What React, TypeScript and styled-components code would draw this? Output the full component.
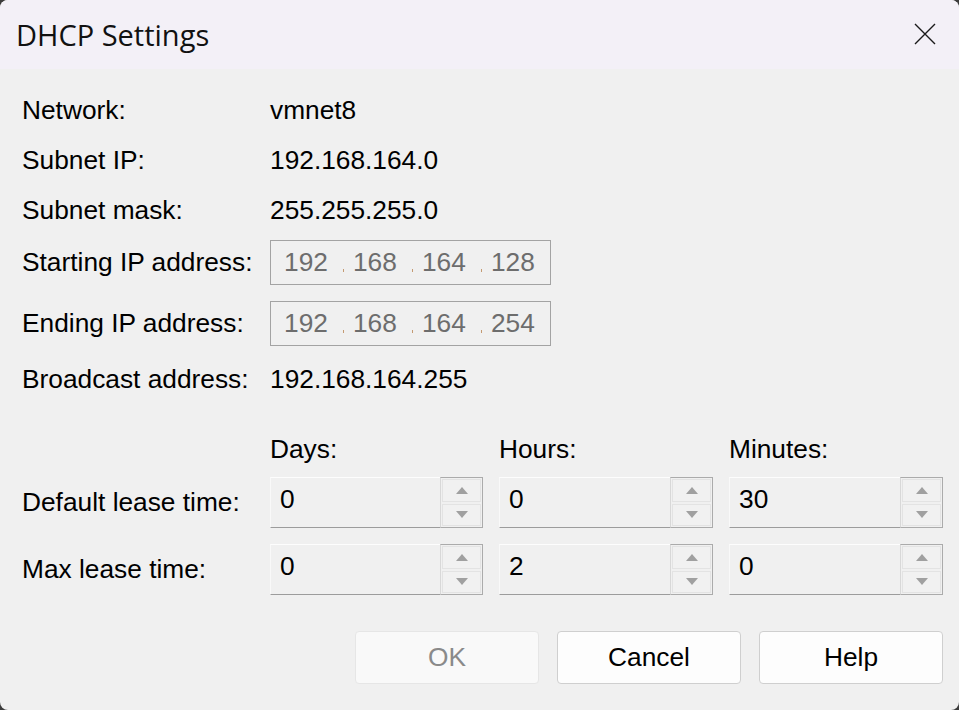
import React from "react";
import styled, { createGlobalStyle } from "styled-components";

const GlobalStyle = createGlobalStyle`
  html, body {
    margin: 0;
    padding: 0;
    background: #3c3c3c;
  }
  * {
    box-sizing: border-box;
  }
`;

const Window = styled.div`
  width: 959px;
  height: 710px;
  background: #f0f0f0;
  border-radius: 8px;
  overflow: hidden;
  display: flex;
  flex-direction: column;
  font-family: "Liberation Sans", Arial, sans-serif;
  color: #000;
`;

const TitleBar = styled.div`
  height: 69px;
  flex-shrink: 0;
  background: #f3f0f7;
  display: flex;
  align-items: center;
  justify-content: space-between;
  padding: 0 22px 0 16px;
`;

const Title = styled.div`
  font-family: "Open Sans", "Noto Sans", sans-serif;
  font-size: 29px;
  margin-top: -1px;
  color: #111;
`;

const CloseButton = styled.div`
  width: 24px;
  height: 24px;
  display: flex;
  align-items: center;
  justify-content: center;
  margin-top: -2px;
`;

const Content = styled.div`
  padding: 16px 16px 0 22px;
  display: flex;
  flex-direction: column;
`;

const Row = styled.div<{ $h: number; $mt?: number }>`
  height: ${(p) => p.$h}px;
  margin-top: ${(p) => p.$mt ?? 0}px;
  display: flex;
  align-items: center;
`;

const Label = styled.div`
  width: 248px;
  font-size: 26.3px;
  white-space: nowrap;
`;

const Value = styled.div`
  font-size: 26.3px;
  white-space: nowrap;
`;

const IpField = styled.div`
  width: 281px;
  height: 45px;
  border: 1px solid #a3a3a3;
  background: #f0f0f0;
  display: flex;
  align-items: center;
  padding-left: 13px;
  color: #6d6d6d;
  font-size: 26.3px;
`;

const Octet = styled.span`
  width: 60px;
`;

const Dot = styled.span`
  width: 10px;
  height: 19px;
  display: flex;
  align-items: flex-end;
  &::after {
    content: "";
    width: 1px;
    height: 3px;
    background: #c49a72;
  }
`;

const LeaseGrid = styled.div`
  margin-top: 29px;
  display: grid;
  grid-template-columns: 232px 213px 214px 214px;
  grid-template-rows: 26px 51px 52px;
  column-gap: 16px;
  row-gap: 15px;
  align-items: center;
  font-size: 26.3px;
`;

const ColHead = styled.div`
  font-size: 26.3px;
`;

const Spinner = styled.div<{ $shift?: number }>`
  height: 51px;
  margin-top: ${(p) => p.$shift ?? 0}px;
  display: flex;
`;

const SpinField = styled.div`
  flex: 1;
  border-top: 1px solid #fdfdfd;
  border-left: 1px solid #f9f9f9;
  border-bottom: 1px solid #9c9c9c;
  background: #f0f0f0;
  padding: 6px 0 0 9px;
  font-size: 26.3px;
  line-height: 30px;
`;

const SpinButtons = styled.div`
  width: 43px;
  border: 1px solid #ababab;
  border-left: 1px solid #d8d8d8;
  padding: 1px;
  display: flex;
  flex-direction: column;
  gap: 2px;
`;

const SpinButton = styled.div`
  flex: 1;
  border: 1px solid #e3e3e3;
  background: #f1f1f1;
  display: flex;
  align-items: center;
  justify-content: center;
`;

const ButtonRow = styled.div`
  margin-top: 36px;
  display: flex;
  justify-content: flex-end;
  gap: 18px;
`;

const DialogButton = styled.div<{ $disabled?: boolean }>`
  width: 184px;
  height: 53px;
  border-radius: 4px;
  border: 1px solid ${(p) => (p.$disabled ? "#e6e6e6" : "#cfcfcf")};
  background: ${(p) => (p.$disabled ? "#f9f9f9" : "#fdfdfd")};
  color: ${(p) => (p.$disabled ? "#8a8a8a" : "#000")};
  display: flex;
  align-items: center;
  justify-content: center;
  font-size: 26.3px;
`;

const Arrow = ({ up }: { up?: boolean }) => (
  <svg width="12" height="7" viewBox="0 0 12 7">
    <path d={up ? "M0 7 L6 0 L12 7 Z" : "M0 0 L6 7 L12 0 Z"} fill="#a0a0a0" />
  </svg>
);

const SpinBox = ({ value, shift }: { value: string; shift?: number }) => (
  <Spinner $shift={shift}>
    <SpinField>{value}</SpinField>
    <SpinButtons>
      <SpinButton>
        <Arrow up />
      </SpinButton>
      <SpinButton>
        <Arrow />
      </SpinButton>
    </SpinButtons>
  </Spinner>
);

const IpAddress = ({ parts }: { parts: string[] }) => (
  <IpField>
    {parts.map((p, i) => (
      <React.Fragment key={i}>
        {i > 0 && <Dot />}
        <Octet>{p}</Octet>
      </React.Fragment>
    ))}
  </IpField>
);

export default function App() {
  return (
    <>
      <GlobalStyle />
      <Window>
        <TitleBar>
          <Title>DHCP Settings</Title>
          <CloseButton>
            <svg width="22" height="22" viewBox="0 0 22 22">
              <path d="M1 1 L21 21 M21 1 L1 21" stroke="#1a1a1a" strokeWidth="1.4" />
            </svg>
          </CloseButton>
        </TitleBar>
        <Content>
          <Row $h={50}>
            <Label>Network:</Label>
            <Value>vmnet8</Value>
          </Row>
          <Row $h={50}>
            <Label>Subnet IP:</Label>
            <Value>192.168.164.0</Value>
          </Row>
          <Row $h={50}>
            <Label>Subnet mask:</Label>
            <Value>255.255.255.0</Value>
          </Row>
          <Row $h={55}>
            <Label>Starting IP address:</Label>
            <IpAddress parts={["192", "168", "164", "128"]} />
          </Row>
          <Row $h={55} $mt={6}>
            <Label>Ending IP address:</Label>
            <IpAddress parts={["192", "168", "164", "254"]} />
          </Row>
          <Row $h={56}>
            <Label>Broadcast address:</Label>
            <Value>192.168.164.255</Value>
          </Row>
          <LeaseGrid>
            <div />
            <ColHead>Days:</ColHead>
            <ColHead>Hours:</ColHead>
            <ColHead>Minutes:</ColHead>
            <Label>Default lease time:</Label>
            <SpinBox value="0" />
            <SpinBox value="0" />
            <SpinBox value="30" />
            <Label>Max lease time:</Label>
            <SpinBox value="0" shift={1} />
            <SpinBox value="2" shift={1} />
            <SpinBox value="0" shift={1} />
          </LeaseGrid>
          <ButtonRow>
            <DialogButton $disabled>OK</DialogButton>
            <DialogButton>Cancel</DialogButton>
            <DialogButton>Help</DialogButton>
          </ButtonRow>
        </Content>
      </Window>
    </>
  );
}
